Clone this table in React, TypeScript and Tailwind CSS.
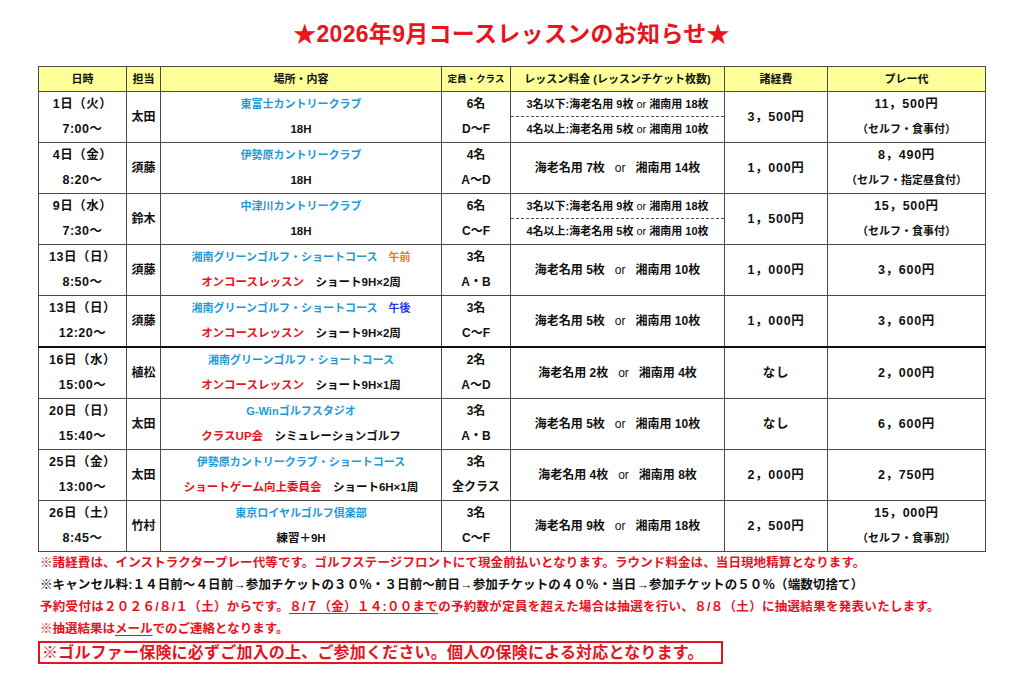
import React from 'react'

type Seg = { t: string; c?: 'blue' | 'red' | 'orange' | 'navy' }

interface Row {
  date: string
  time: string
  staff: string
  place: Seg[]
  sub: Seg[]
  cap: string
  cls: string
  fee: string[]
  cost: string
  play: string
  playNote?: string
  thick?: boolean
}

const colorOf: Record<string, string> = {
  blue: 'text-[#1f9ad8]',
  red: 'text-[#e5141e]',
  orange: 'text-[#f07a12]',
  navy: 'text-[#2337e0]',
}

const split1 = ['3名以下:海老名用 9枚 or 湘南用 18枚', '4名以上:海老名用 5枚 or 湘南用 10枚']

const rows: Row[] = [
  { date: '1日（火）', time: '7:00～', staff: '太田', place: [{ t: '東富士カントリークラブ', c: 'blue' }], sub: [{ t: '18H' }], cap: '6名', cls: 'D～F', fee: split1, cost: '3，500円', play: '11，500円', playNote: '（セルフ・食事付）' },
  { date: '4日（金）', time: '8:20～', staff: '須藤', place: [{ t: '伊勢原カントリークラブ', c: 'blue' }], sub: [{ t: '18H' }], cap: '4名', cls: 'A～D', fee: ['海老名用 7枚   or   湘南用 14枚'], cost: '1，000円', play: '8，490円', playNote: '（セルフ・指定昼食付）' },
  { date: '9日（水）', time: '7:30～', staff: '鈴木', place: [{ t: '中津川カントリークラブ', c: 'blue' }], sub: [{ t: '18H' }], cap: '6名', cls: 'C～F', fee: split1, cost: '1，500円', play: '15，500円', playNote: '（セルフ・食事付）' },
  { date: '13日（日）', time: '8:50～', staff: '須藤', place: [{ t: '湘南グリーンゴルフ・ショートコース　', c: 'blue' }, { t: '午前', c: 'orange' }], sub: [{ t: 'オンコースレッスン', c: 'red' }, { t: '　ショート9H×2周' }], cap: '3名', cls: 'A・B', fee: ['海老名用 5枚   or   湘南用 10枚'], cost: '1，000円', play: '3，600円' },
  { date: '13日（日）', time: '12:20～', staff: '須藤', place: [{ t: '湘南グリーンゴルフ・ショートコース　', c: 'blue' }, { t: '午後', c: 'navy' }], sub: [{ t: 'オンコースレッスン', c: 'red' }, { t: '　ショート9H×2周' }], cap: '3名', cls: 'C～F', fee: ['海老名用 5枚   or   湘南用 10枚'], cost: '1，000円', play: '3，600円', thick: true },
  { date: '16日（水）', time: '15:00～', staff: '植松', place: [{ t: '湘南グリーンゴルフ・ショートコース', c: 'blue' }], sub: [{ t: 'オンコースレッスン', c: 'red' }, { t: '　ショート9H×1周' }], cap: '2名', cls: 'A～D', fee: ['海老名用 2枚   or   湘南用 4枚'], cost: 'なし', play: '2，000円' },
  { date: '20日（日）', time: '15:40～', staff: '太田', place: [{ t: 'G-Winゴルフスタジオ', c: 'blue' }], sub: [{ t: 'クラスUP会', c: 'red' }, { t: '　シミュレーションゴルフ' }], cap: '3名', cls: 'A・B', fee: ['海老名用 5枚   or   湘南用 10枚'], cost: 'なし', play: '6，600円' },
  { date: '25日（金）', time: '13:00～', staff: '太田', place: [{ t: '伊勢原カントリークラブ・ショートコース', c: 'blue' }], sub: [{ t: 'ショートゲーム向上委員会', c: 'red' }, { t: '　ショート6H×1周' }], cap: '3名', cls: '全クラス', fee: ['海老名用 4枚   or   湘南用 8枚'], cost: '2，000円', play: '2，750円' },
  { date: '26日（土）', time: '8:45～', staff: '竹村', place: [{ t: '東京ロイヤルゴルフ倶楽部', c: 'blue' }], sub: [{ t: '練習＋9H' }], cap: '3名', cls: 'C～F', fee: ['海老名用 9枚   or   湘南用 18枚'], cost: '2，500円', play: '15，000円', playNote: '（セルフ・食事別）' },
]

function FeeText({ text }: { text: string }) {
  const parts = text.split('or')
  return (
    <span className="whitespace-pre">
      {parts[0]}
      <span className="font-normal">or</span>
      {parts[1]}
    </span>
  )
}

function Segs({ segs }: { segs: Seg[] }) {
  return (
    <span className="whitespace-pre">
      {segs.map((s, i) => (
        <span key={i} className={s.c ? colorOf[s.c] : ''}>{s.t}</span>
      ))}
    </span>
  )
}

const cell = 'border border-[#4a4a4a] p-0 align-middle text-center'

export default function App() {
  return (
    <div className="w-[1024px] h-[688px] bg-white overflow-hidden [font-family:'Liberation_Sans','Noto_Sans_CJK_JP',sans-serif] font-bold text-[#111]">
      <div className="ml-[38px] w-[947px]">
        <h1 className="pt-[19px] h-[49px] leading-[30px] text-center text-[23px] tracking-[0.3px] text-[#e8141e] font-bold">
          ★2026年9月コースレッスンのお知らせ★
        </h1>

        <table className="mt-[17px] w-[947px] table-fixed border-collapse">
          <colgroup>
            <col className="w-[88px]" />
            <col className="w-[34px]" />
            <col className="w-[281px]" />
            <col className="w-[69px]" />
            <col className="w-[214px]" />
            <col className="w-[103px]" />
            <col className="w-[158px]" />
          </colgroup>
          <thead>
            <tr className="h-[25px] bg-[#ffff99] text-[11px]">
              <th className={cell}>日時</th>
              <th className={cell}>担当</th>
              <th className={cell}>場所・内容</th>
              <th className={cell + ' text-[9.5px]'}>定員・クラス</th>
              <th className={cell}>レッスン料金 (レッスンチケット枚数)</th>
              <th className={cell}>諸経費</th>
              <th className={cell}>プレー代</th>
            </tr>
          </thead>
          <tbody>
            {rows.map((r, i) => (
              <tr key={i} className={'h-[51px] ' + (r.thick ? 'border-b-2 border-b-[#111]' : '')}>
                <td className={cell + ' text-[12.5px] tracking-[0.5px]'}>
                  <div className="h-[25px] leading-[25px]">{r.date}</div>
                  <div className="h-[25px] leading-[25px]">{r.time}</div>
                </td>
                <td className={cell + ' text-[12px]'}>{r.staff}</td>
                <td className={cell + ' text-[11px]'}>
                  <div className="h-[25px] leading-[25px]"><Segs segs={r.place} /></div>
                  <div className="h-[25px] leading-[25px] text-[11.5px]"><Segs segs={r.sub} /></div>
                </td>
                <td className={cell + ' text-[12px]'}>
                  <div className="h-[25px] leading-[25px]">{r.cap}</div>
                  <div className="h-[25px] leading-[25px]">{r.cls}</div>
                </td>
                <td className={cell}>
                  {r.fee.length === 2 ? (
                    <div className="text-[11px]">
                      <div className="h-[25px] leading-[25px] border-b border-dashed border-[#555]"><FeeText text={r.fee[0]} /></div>
                      <div className="h-[25px] leading-[25px]"><FeeText text={r.fee[1]} /></div>
                    </div>
                  ) : (
                    <div className="text-[12px]"><FeeText text={r.fee[0]} /></div>
                  )}
                </td>
                <td className={cell + ' text-[12.5px] tracking-[0.7px]'}>{r.cost}</td>
                <td className={cell + ' text-[12.5px] tracking-[0.7px]'}>
                  {r.playNote ? (
                    <>
                      <div className="h-[25px] leading-[25px]">{r.play}</div>
                      <div className="h-[25px] leading-[25px] text-[11px] tracking-normal">{r.playNote}</div>
                    </>
                  ) : (
                    r.play
                  )}
                </td>
              </tr>
            ))}
          </tbody>
        </table>

        <div className="text-[12.5px] leading-[22px] pl-[2px] whitespace-nowrap">
          <p className="text-[#e5141e] tracking-[0.1px]">※諸経費は、インストラクタープレー代等です。ゴルフステージフロントにて現金前払いとなります。ラウンド料金は、当日現地精算となります。</p>
          <p className="text-[#111] tracking-[0.1px]">※キャンセル料:１４日前～４日前→参加チケットの３０％・３日前～前日→参加チケットの４０％・当日→参加チケットの５０％（端数切捨て）</p>
          <p className="text-[#e5141e] tracking-[0.3px]">
            予約受付は２０２６/８/１（土）からです。<span className="underline underline-offset-2">８/７（金）１４:００まで</span>の予約数が定員を超えた場合は抽選を行い、８/８（土）に抽選結果を発表いたします。
          </p>
          <p className="text-[#e5141e]">※抽選結果は<span className="underline underline-offset-2">メール</span>でのご連絡となります。</p>
        </div>
        <div className="mt-[1px] w-[685px] h-[23px] border-2 border-[#e5141e] text-[16px] tracking-[0.2px] leading-[19px] text-[#e5141e] pl-[2px] whitespace-nowrap">
          ※ゴルファー保険に必ずご加入の上、ご参加ください。個人の保険による対応となります。
        </div>
      </div>
    </div>
  )
}
